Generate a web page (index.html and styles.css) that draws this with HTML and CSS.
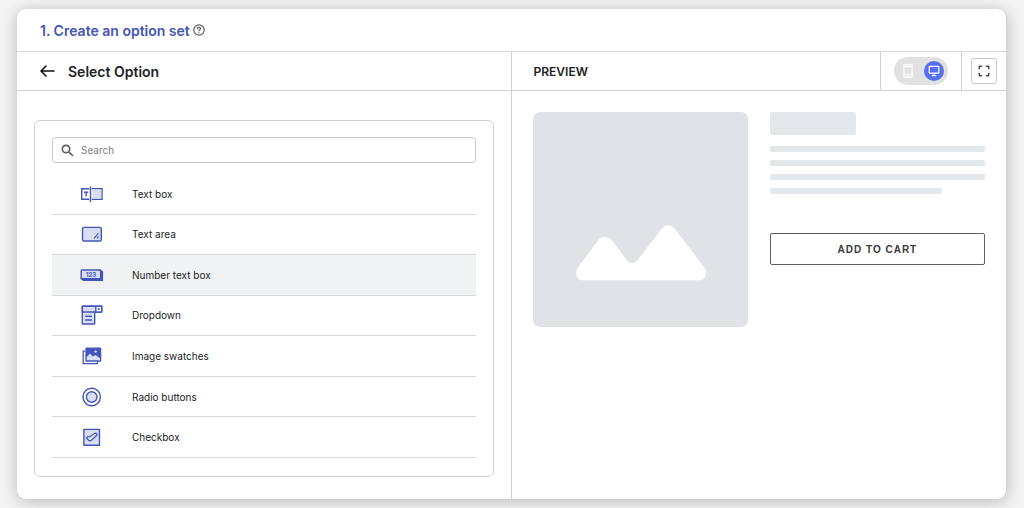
FILE: index.html
```
<!DOCTYPE html>
<html lang="en">
<head>
    <meta charset="UTF-8">
    <meta name="viewport" content="width=device-width, initial-scale=1.0">
    <title>Create an option set</title>
    <link rel="stylesheet" href="styles.css">
</head>
<body>
    <main class="panel">
        <header class="panel-header">
            <h1>1. Create an option set</h1>
            <button type="button" class="icon-button help" aria-label="Help">
                <svg width="12" height="12" viewBox="0 0 12 12" fill="none" stroke="#5c5f62" stroke-width="1.2" stroke-linecap="round">
                    <circle cx="6" cy="6" r="5.2"/>
                    <path d="M4.5 4.8C4.5 2.9 7.5 2.9 7.5 4.7C7.5 5.7 6 5.7 6 6.8M6 8.7V8.8"/>
                </svg>
            </button>
        </header>

        <div class="columns">
            <section class="select">
                <div class="bar select-bar">
                    <button type="button" class="icon-button" aria-label="Back">
                        <svg width="16" height="12" viewBox="0 0 16 12" fill="none" stroke="#111" stroke-width="1.6" stroke-linecap="round" stroke-linejoin="round">
                            <path d="M7 1L2 6L7 11M2.2 6H15"/>
                        </svg>
                    </button>
                    <h2>Select Option</h2>
                </div>

                <div class="card">
                    <label class="search">
                        <svg width="13" height="13" viewBox="0 0 13 13" fill="none" stroke="#5c5f62" stroke-width="1.7">
                            <circle cx="5" cy="5" r="3.7"/>
                            <path d="M7.8 7.8L12 12"/>
                        </svg>
                        <input type="search" placeholder="Search" aria-label="Search">
                    </label>

                    <ul class="options">
                        <li>
                            <button type="button" class="option">
                                <svg width="24" height="20" viewBox="0 0 24 20" fill="none" stroke="#4355b9" stroke-width="1.4">
                                    <path d="M9.2 4.7H1.7V15.3H9.2"/>
                                    <path d="M11.8 4.7H22V15.3H11.8" />
                                    <rect x="12.2" y="5.4" width="9.1" height="9.2" fill="#dadef2" stroke="none"/>
                                    <path d="M10.5 2.4V18"/>
                                    <path d="M4 8.2H8.2M6.1 8.2V12.2" stroke-width="1.4"/>
                                </svg>
                                Text box
                            </button>
                        </li>
                        <li>
                            <button type="button" class="option">
                                <svg width="24" height="20" viewBox="0 0 24 20" fill="none" stroke="#4355b9" stroke-width="1.4">
                                    <rect x="2.5" y="3.4" width="18.8" height="13.6" rx="1.6" fill="#dadef2"/>
                                    <path d="M14 14.4L18.4 9.4M17 14.4L18.6 12.6" stroke-width="1.2"/>
                                </svg>
                                Text area
                            </button>
                        </li>
                        <li>
                            <button type="button" class="option active">
                                <svg width="24" height="20" viewBox="0 0 24 20" fill="none" stroke="#4355b9" stroke-width="1.4">
                                    <path d="M20 5L22.4 6.8V15.4H3.4L1.2 13.4Z" fill="#4355b9"/>
                                    <rect x="1.2" y="5" width="19.4" height="8.8" rx="1" fill="#dadef2"/>
                                    <text x="11" y="12.2" class="digits">123</text>
                                </svg>
                                Number text box
                            </button>
                        </li>
                        <li>
                            <button type="button" class="option">
                                <svg width="24" height="20" viewBox="0 0 24 20" fill="none" stroke="#4355b9" stroke-width="1.4">
                                    <rect x="2.3" y="1.2" width="12.4" height="17.8" rx="0.5" fill="#dadef2"/>
                                    <rect x="2.3" y="1.2" width="19.4" height="5.8" rx="0.5" fill="#dadef2"/>
                                    <rect x="15.8" y="1.2" width="5.9" height="5.8" fill="#fff"/>
                                    <path d="M17.7 4H19.8" stroke-width="1.5"/>
                                    <path d="M5.2 11.2H12M5.2 15H12"/>
                                </svg>
                                Dropdown
                            </button>
                        </li>
                        <li>
                            <button type="button" class="option">
                                <svg width="24" height="20" viewBox="0 0 24 20" fill="none" stroke="#4355b9" stroke-width="1.3">
                                    <path d="M5 5.2H3.2V17.6H17.4V15.6"/>
                                    <rect x="6" y="2.2" width="14.6" height="12.8" rx="0.6" fill="#4355b9"/>
                                    <path d="M6.7 14.3V11L10 7.6L13 10.6L15.4 9L20 12.2V14.3Z" fill="#dadef2" stroke="none"/>
                                    <circle cx="15.6" cy="5.6" r="1.2" fill="#dadef2" stroke="none"/>
                                </svg>
                                Image swatches
                            </button>
                        </li>
                        <li>
                            <button type="button" class="option">
                                <svg width="24" height="20" viewBox="0 0 24 20" fill="none" stroke="#4355b9" stroke-width="1.4">
                                    <circle cx="11.7" cy="10" r="8.7"/>
                                    <circle cx="11.7" cy="10" r="5.3" fill="#dadef2"/>
                                </svg>
                                Radio buttons
                            </button>
                        </li>
                        <li>
                            <button type="button" class="option">
                                <svg width="24" height="20" viewBox="0 0 24 20" fill="none" stroke="#4355b9" stroke-width="1.4" stroke-linejoin="round">
                                    <rect x="3.9" y="2.4" width="15.6" height="15.8" fill="#dadef2"/>
                                    <path d="M6.6 11C7 9.5 8.2 9.2 9.4 10L14.6 6.5C16.4 5.7 17.8 7.2 16.6 8.6L11.4 13.3C10.3 14.2 9.2 14 8.4 13Z" fill="#e9ecfa" stroke-width="1.3"/>
                                </svg>
                                Checkbox
                            </button>
                        </li>
                    </ul>
                </div>
            </section>

            <section class="preview">
                <div class="bar preview-bar">
                    <h3>PREVIEW</h3>
                    <div class="bar-cell">
                        <div class="device-toggle">
                            <button type="button" class="device" aria-label="Mobile preview">
                                <svg width="10" height="14" viewBox="0 0 10 14" fill="none" stroke="#fff" stroke-width="1.1">
                                    <rect x="0.9" y="0.9" width="8.2" height="12.2" rx="0.4"/>
                                    <path d="M1 2.6H9M1 10.8H9M4.2 12H5.8"/>
                                </svg>
                            </button>
                            <button type="button" class="device selected" aria-label="Desktop preview">
                                <svg width="12" height="12" viewBox="0 0 12 12" fill="none" stroke="#fff" stroke-width="1.2">
                                    <rect x="1.2" y="1.4" width="9.6" height="6.8" rx="0.4"/>
                                    <path d="M6 8.2V10.4M3.8 10.6H8.2"/>
                                </svg>
                            </button>
                        </div>
                    </div>
                    <div class="bar-cell">
                        <button type="button" class="fullscreen" aria-label="Full screen">
                            <svg width="12" height="12" viewBox="0 0 12 12" fill="none" stroke="#4a4d50" stroke-width="1.5" stroke-linejoin="round">
                                <path d="M1.3 4.2V1.3H4.2M7.8 1.3H10.7V4.2M10.7 7.8V10.7H7.8M4.2 10.7H1.3V7.8"/>
                            </svg>
                        </button>
                    </div>
                </div>

                <div class="product">
                    <svg class="product-image" viewBox="0 0 215 215">
                        <path fill="#fff" d="M50 168C44 168 41 161 45 155L66 127C69 124 75 124 78 127L93 147C96 152 102 152 105 147L129 116C132 112 138 112 141 116L171 155C175 161 172 168 166 168Z"/>
                    </svg>
                    <div class="product-info">
                        <div class="line line-title"></div>
                        <div class="line"></div>
                        <div class="line"></div>
                        <div class="line"></div>
                        <div class="line line-short"></div>
                        <button type="button" class="add-to-cart">ADD TO CART</button>
                    </div>
                </div>
            </section>
        </div>
    </main>
</body>
</html>
```
FILE: styles.css
```
* {
    box-sizing: border-box;
}
body {
    font-family: Inter, "Liberation Sans", sans-serif;
    font-size: 10px;
    color: #202223;
    background-color: #f4f4f4;
    margin: 0;
    padding: 9px 17px;
    min-height: 100vh;
    display: flex;
}
h1, h2, h3 {
    margin: 0;
    font-weight: 600;
}
h1, h2 {
    font-size: 14px;
}
h3 {
    font-size: 12px;
}
button {
    font-family: inherit;
    color: inherit;
    cursor: pointer;
}
svg {
    display: block;
}
.panel {
    flex: 1;
    display: flex;
    flex-direction: column;
    background-color: white;
    border-right: 1px solid #d2d2d2;
    border-radius: 9px;
    box-shadow: 0 2px 16px rgba(0,0,0,0.25);
}
.panel-header {
    display: flex;
    align-items: center;
    gap: 3px;
    height: 43px;
    padding: 0 23px;
    border-bottom: 1px solid #d8d8d8;
}
.panel-header h1 {
    color: #4355b9;
}
.icon-button {
    padding: 0;
    border: none;
    background: none;
}
.columns {
    flex: 1;
    display: grid;
    grid-template-columns: 1fr 1fr;
}
.select {
    display: flex;
    flex-direction: column;
    border-right: 1px solid #d2d2d2;
}
.bar {
    display: flex;
    align-items: center;
    height: 39px;
    border-bottom: 1px solid #d2d2d2;
}
.select-bar {
    gap: 13px;
    padding: 0 22px;
}
.card {
    flex: 1;
    display: flex;
    flex-direction: column;
    gap: 11px;
    margin: 29px 17px 22px;
    padding: 16px 17px 18px;
    border: 1px solid #d2d2d2;
    border-radius: 6px;
}
.search {
    display: flex;
    align-items: center;
    gap: 7px;
    height: 26px;
    padding: 0 8px;
    border: 1px solid #c9cccf;
    border-radius: 3px;
}
.search input {
    flex: 1;
    min-width: 0;
    padding: 0;
    border: none;
    outline: none;
    background: none;
    font-family: inherit;
    font-size: 10px;
}
.search input::placeholder {
    color: #7c7f82;
}
.options {
    flex: 1;
    display: grid;
    grid-auto-rows: 1fr;
    margin: 0;
    padding: 0;
    list-style: none;
}
.option {
    display: flex;
    align-items: center;
    gap: 28px;
    width: 100%;
    height: 100%;
    padding: 0 28px;
    border: none;
    border-bottom: 1px solid #d8d8d8;
    background: none;
    font-size: 10px;
}
.option:hover,
.option.active {
    background-color: #f1f2f4;
}
.digits {
    font-size: 6px;
    font-weight: 700;
    text-anchor: middle;
    fill: #4355b9;
    stroke: none;
}
.preview-bar h3 {
    flex: 1;
    padding-left: 22px;
}
.bar-cell {
    display: flex;
    align-items: center;
    height: 100%;
    padding: 0 9px;
    border-left: 1px solid #d2d2d2;
}
.device-toggle {
    display: flex;
    align-items: center;
    gap: 6px;
    margin: 0 4px;
    padding: 4px;
    border-radius: 14px;
    background-color: #e1e1e1;
}
.device {
    display: grid;
    place-items: center;
    width: 20px;
    height: 20px;
    padding: 0;
    border: none;
    border-radius: 50%;
    background: none;
}
.device.selected {
    background-color: #5570f1;
}
.fullscreen {
    display: grid;
    place-items: center;
    width: 26px;
    height: 26px;
    padding: 0;
    border: 1px solid #c9cccf;
    border-radius: 3px;
    background: white;
}
.product {
    display: grid;
    grid-template-columns: 1fr 1fr;
    align-items: start;
    gap: 22px;
    padding: 21px;
}
.product-image {
    width: 100%;
    border-radius: 7px;
    background-color: #e1e2e6;
}
.product-info {
    display: flex;
    flex-direction: column;
    gap: 8px;
}
.line {
    height: 6px;
    border-radius: 2px;
    background-color: #e4e8eb;
}
.line-title {
    width: 40%;
    height: 23px;
    margin-bottom: 3px;
}
.line-short {
    width: 80%;
}
.add-to-cart {
    height: 32px;
    margin-top: 31px;
    border: 1px solid #5f5f5f;
    border-radius: 2px;
    background: white;
    color: #3a3a3a;
    font-family: "Liberation Sans", Arial, sans-serif;
    font-size: 10px;
    font-weight: 700;
    letter-spacing: 1px;
}
```
